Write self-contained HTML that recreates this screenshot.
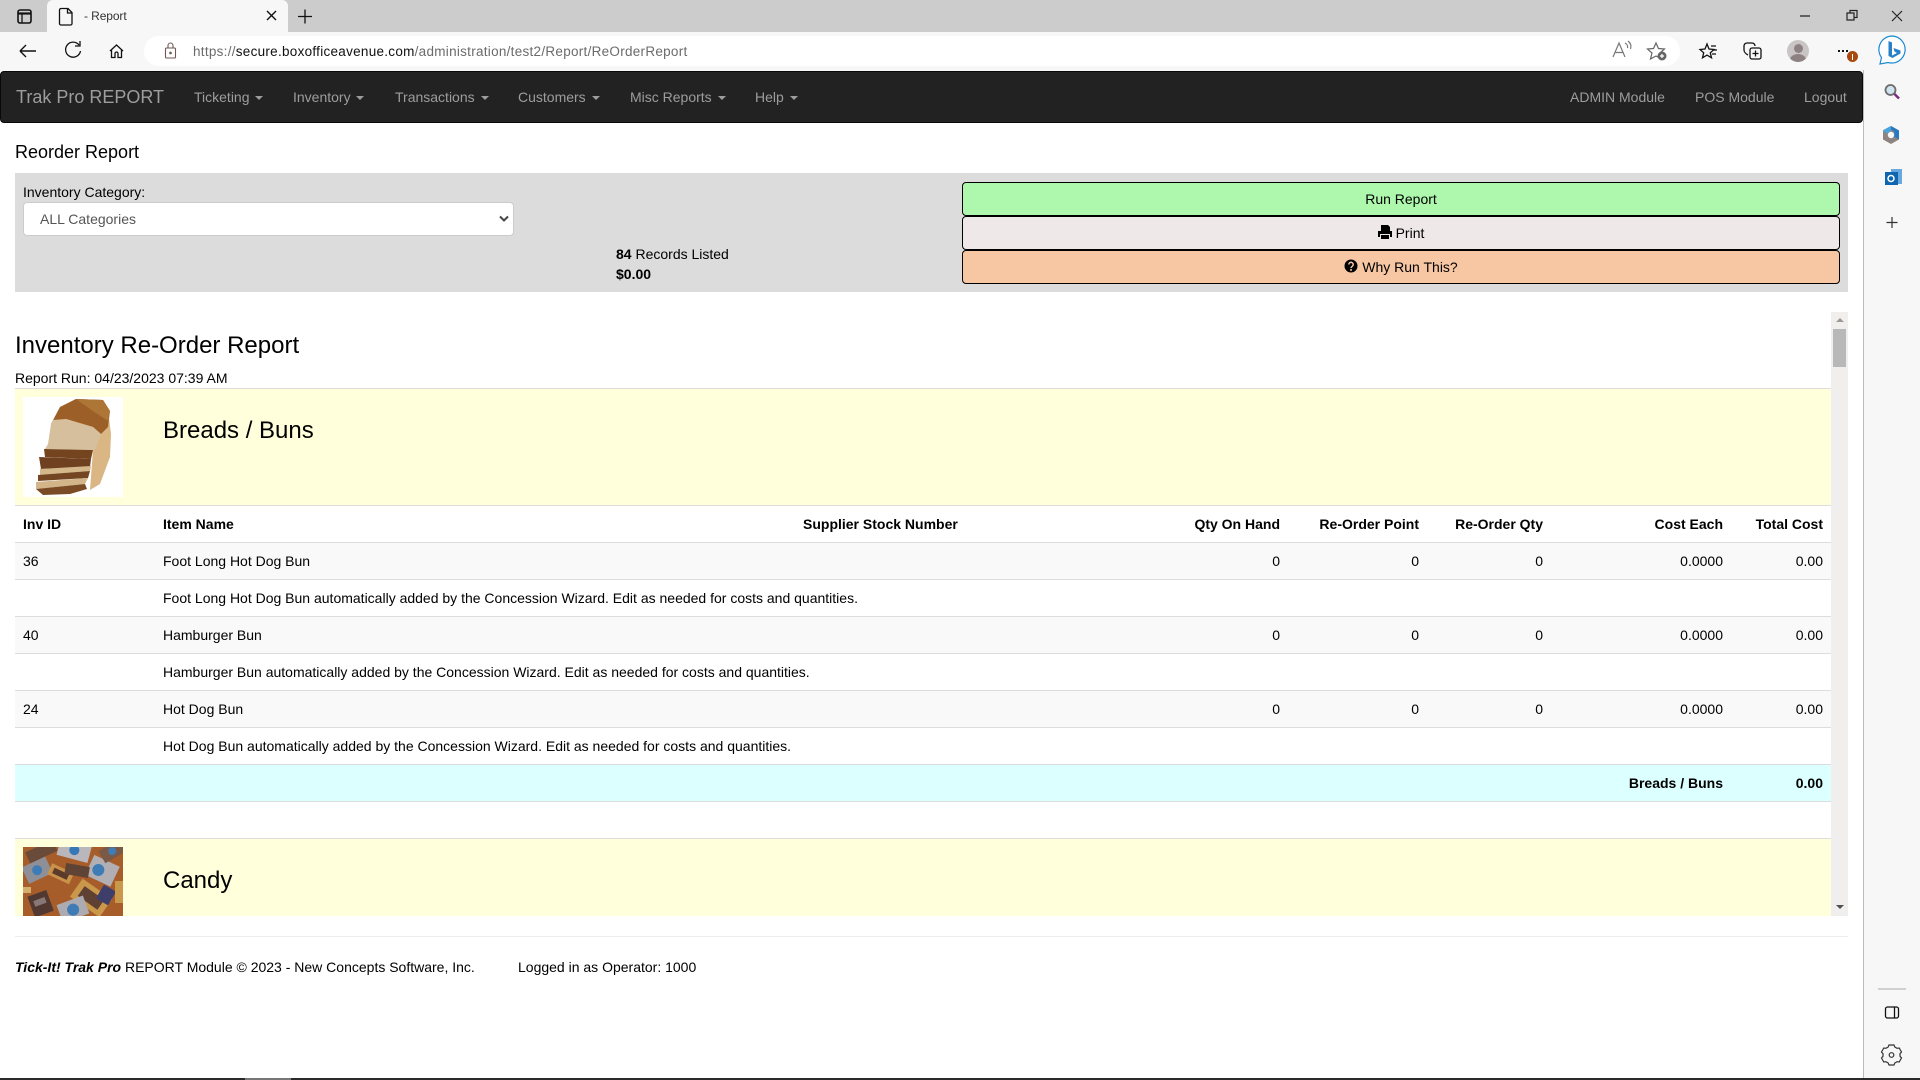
<!DOCTYPE html>
<html><head><meta charset="utf-8"><title>- Report</title>
<style>
html,body{margin:0;padding:0;background:#fff;width:1920px;height:1080px;overflow:hidden}
body{font:14px/20px "Liberation Sans",sans-serif;color:#000;position:relative}
.a{position:absolute;white-space:nowrap}
.b{position:absolute}
.n{position:absolute;top:87px;color:#9d9d9d;white-space:nowrap}
.n i{display:inline-block;width:0;height:0;border-top:4px solid #9d9d9d;border-left:4px solid transparent;border-right:4px solid transparent;margin-left:2px;vertical-align:middle}
.r{position:absolute;left:15px;width:1816px;box-sizing:border-box;border-top:1px solid #ddd}
.t{position:absolute;white-space:nowrap;height:20px}
.btn{position:absolute;left:962px;width:878px;height:34px;box-sizing:border-box;border:1px solid #000;border-radius:4px;text-align:center;line-height:32px}
svg{position:absolute;overflow:visible}
</style></head><body>

<!-- tab strip -->
<div class="b" style="left:0;top:0;width:1920px;height:32px;background:#ccc"></div>
<div class="b" style="left:47px;top:0;width:241px;height:32px;background:#f7f7f7;border-radius:6px 6px 0 0"></div>
<div class="b" style="left:0;top:32px;width:1920px;height:39px;background:#f7f7f7"></div>
<svg style="left:0;top:0" width="300" height="70" fill="none" stroke="#111" stroke-width="1.3">
<rect x="18" y="10" width="13" height="13" rx="2" stroke-width="1.6"/><path d="M18 13.500h13" stroke-width="2.200"/><path d="M22 13.500V23" />
<path d="M61 8.500h7l4 4v11a1.500 1.500 0 0 1-1.500 1.500H61a1.500 1.500 0 0 1-1.500-1.500V10A1.500 1.500 0 0 1 61 8.500zM67.500 8.500v4.500h4.500"/>
<path d="M267 11l9 9M276 11l-9 9" stroke-width="1.4"/>
<path d="M305 9.500v14M298 16.500h14"/>
<path d="M20 51h16M20 51l6-6M20 51l6 6" stroke-width="1.4"/>
<path d="M79 45a7.500 7.500 0 1 0 1.500 6M80 41v5h-5" stroke-width="1.3"/>
<path d="M110 51l6.500-6 6.500 6M111.500 50v7.500h3.500v-4a1.500 1.500 0 0 1 3 0v4h3.500V50" stroke-width="1.3"/>
</svg>
<div class="a" style="left:84px;top:6px;font-size:12px;color:#333;letter-spacing:-.1px">- Report</div>

<!-- address bar -->
<div class="b" style="left:144px;top:36px;width:1536px;height:30px;background:#fff;border-radius:15px"></div>
<svg style="left:164px;top:42px" width="16" height="18" fill="none" stroke="#6e5a55" stroke-width="1.1"><rect x="1.500" y="6" width="10" height="10" rx="1"/><path d="M4 6V3.500a2.500 2.500 0 0 1 5 0V6"/><circle cx="6.500" cy="11" r=".8" fill="#6e5a55"/></svg>
<div class="a" style="left:193px;top:42px;font-size:13.5px;color:#6b6b6b;letter-spacing:.28px"><span>https://</span><span style="color:#111">secure.boxofficeavenue.com</span>/administration/test2/Report/ReOrderReport</div>

<svg style="left:0;top:0" width="1920" height="70" fill="none" stroke="#111" stroke-width="1.2">
<path d="M1800 16h10M1847 13h7v7h-7zM1850 13v-2.500h7v7h-3M1892 11l10 10M1902 11l-10 10" stroke="#222"/>
<path d="M1613 57l6-14 6 14M1615.500 52.500h7M1625 43c2 1 3 3 2.500 5M1628 41c2.500 2 3.500 5 2.500 8" stroke="#777"/>
<path d="M1656 43l2.500 5.500 6 .5-4.500 4 1.500 6-5.500-3-5.500 3 1.500-6-4.500-4 6-.5z" stroke="#666"/>
<circle cx="1662" cy="56" r="4.500" fill="#666" stroke="none"/><path d="M1660 56h4M1662 54v4" stroke="#fff"/>
<path d="M1707 44l2 5 5 .5-3.700 3.300 1.200 5-4.500-2.700-4.500 2.700 1.200-5-3.700-3.300 5-.5zM1711 46h5M1713 50h4M1712 54h4" stroke-width="1.3"/>
<rect x="1750" y="48" width="11" height="11" rx="2" stroke-width="1.3"/><path d="M1755.500 50.500v6M1752.500 53.500h6M1748 55c-2-1-4-3-4-5v-4a3 3 0 0 1 3-3h5a3 3 0 0 1 3 3" stroke-width="1.3"/>
</svg>
<div class="b" style="left:1787px;top:40px;width:22px;height:22px;border-radius:50%;background:#c9c5c4;overflow:hidden"><div class="b" style="left:7px;top:4px;width:9px;height:9px;border-radius:50%;background:#8d8281"></div><div class="b" style="left:3px;top:14px;width:16px;height:12px;border-radius:50%;background:#8d8281"></div></div>
<div class="b" style="left:1838px;top:50px;width:2px;height:2px;background:#111;box-shadow:4px 0 #111,8px 0 #111"></div>
<div class="b" style="left:1847px;top:51px;width:11px;height:11px;border-radius:50%;background:#a9480f"></div>
<div class="b" style="left:1852px;top:54px;width:1px;height:6px;background:#fff"></div>
<svg style="left:1877px;top:34px" width="32" height="32" fill="none"><path d="M15 2a13.500 13.500 0 1 1-4 26.500L3 30l1.500-6.500A13.500 13.500 0 0 1 15 2z" fill="#fff" stroke="#1b8ad3" stroke-width="1.200"/><path d="M11.500 7l3.500 1.500v13l5-2.500-2.500-1.500-1-3.500 7 2.500v3l-8 4.500-4-2z" fill="#2a7fc9"/></svg>

<!-- right sidebar -->
<div class="b" style="left:1863px;top:70px;width:57px;height:1008px;background:#f7f7f7;border-left:1px solid #bbb;box-sizing:border-box"></div>
<svg style="left:1867px;top:70px" width="53" height="1010" fill="none">
<circle cx="23.500" cy="20" r="5" fill="#cfe4ee" stroke="#6c6c6c" stroke-width="1.800"/><path d="M27.500 24l4.500 4.500" stroke="#7a2a80" stroke-width="2.500"/>
<path d="M24 56l8 4.500v9L24 74l-8-4.500v-9z" fill="#8d8481"/><path d="M24 56l8 4.500v9l-5-3 .5-5-3.500-2-4 1.500-3.500-1z" fill="#2679c4"/><path d="M16 60.500L24 56v5l-4 2.500z" fill="#4aa4de"/><circle cx="24" cy="65" r="3.200" fill="#f7f7f7"/>
<rect x="24" y="99" width="11" height="15" fill="#69a9e0"/><rect x="18" y="102" width="13" height="13" fill="#0f65b0"/><circle cx="24" cy="108.500" r="3" stroke="#fff" stroke-width="1.500"/>
<path d="M25 147v11M19.500 152.500h11" stroke="#333" stroke-width="1.200"/>
<path d="M11 919h28" stroke="#aaa"/>
<rect x="18.500" y="937" width="13" height="11" rx="2" stroke="#111" stroke-width="1.300"/><path d="M27.500 937v11" stroke="#111" stroke-width="1.300"/>
<circle cx="24.500" cy="985" r="2.300" stroke="#333" stroke-width="1.200"/><path d="M22 975h5l.8 2 2.200 1.300 2.200-.3 2.300 4-1.500 1.700v2.600l1.500 1.700-2.300 4-2.200-.3-2.200 1.300-.8 2h-5l-.8-2-2.200-1.300-2.200.3-2.300-4 1.500-1.700v-2.600l-1.500-1.700 2.300-4 2.200.3 2.200-1.300z" stroke="#333" stroke-width="1.200"/>
</svg>

<!-- navbar -->
<div class="b" style="left:0;top:71px;width:1863px;height:52px;background:#222;border:1px solid #080808;box-sizing:border-box;border-radius:4px"></div>
<div class="a" style="left:16px;top:87px;font-size:18px;color:#9d9d9d">Trak Pro REPORT</div>
<div class="n" style="left:194px">Ticketing <i></i></div>
<div class="n" style="left:293px">Inventory <i></i></div>
<div class="n" style="left:395px">Transactions <i></i></div>
<div class="n" style="left:518px">Customers <i></i></div>
<div class="n" style="left:630px">Misc Reports <i></i></div>
<div class="n" style="left:755px">Help <i></i></div>
<div class="n" style="left:1570px">ADMIN Module</div>
<div class="n" style="left:1695px">POS Module</div>
<div class="n" style="left:1804px">Logout</div>

<!-- heading -->
<div class="a" style="left:15px;top:142px;font-size:18px">Reorder Report</div>

<!-- filter panel -->
<div class="b" style="left:15px;top:173px;width:1833px;height:119px;background:#dcdcdc"></div>
<div class="a" style="left:23px;top:182px">Inventory Category:</div>
<div class="b" style="left:23px;top:202px;width:491px;height:34px;background:#fff;border:1px solid #ccc;border-radius:4px;box-sizing:border-box"></div>
<div class="a" style="left:40px;top:209px;color:#555">ALL Categories</div>
<svg style="left:499px;top:215px" width="10" height="8" fill="none"><path d="M1 1.500l4 4 4-4" stroke="#444" stroke-width="2"/></svg>
<div class="a" style="left:616px;top:244px"><b>84</b> Records Listed</div>
<div class="a" style="left:616px;top:264px"><b>$0.00</b></div>

<div class="btn" style="top:182px;background:#aef8ad">Run Report</div>
<div class="btn" style="top:216px;background:#efe8e8"><svg style="left:415px;top:8px" width="15" height="15" fill="#000"><path d="M3 0h7l2 2v4H3zM0 6h14v6h-2V9H2v3H0zM3 10h8v4H3z"/></svg><span style="margin-left:18px">Print</span></div>
<div class="btn" style="top:250px;background:#f7c6a2"><svg style="left:381px;top:8px" width="14" height="14"><circle cx="7" cy="7" r="6.500" fill="#000"/><path d="M4.800 5.500a2.200 2.200 0 1 1 3.500 1.800c-1 .7-1.300 1-1.300 1.800" fill="none" stroke="#f7c6a2" stroke-width="1.500"/><circle cx="7" cy="11" r="1" fill="#f7c6a2"/></svg><span style="margin-left:18px">Why Run This?</span></div>

<!-- report -->
<div class="a" style="left:15px;top:332px;font-size:24px;line-height:28px">Inventory Re-Order Report</div>
<div class="a" style="left:15px;top:368px">Report Run: 04/23/2023 07:39 AM</div>

<div class="r" style="top:388px;height:117px;background:#ffffdc"></div>
<div class="b" style="left:23px;top:397px;width:100px;height:100px;background:#fff"></div>
<svg style="left:23px;top:397px" width="100" height="100">
<path d="M28 27L37 10 53 2 80 3 85 13 88 37 87 60 77 87 67 93 70 53 78 37z" fill="#d9b684"/>
<path d="M28 27L37 10 53 2 80 3 87 14 85 30 78 37 70 30 43 22z" fill="#9c5f28"/>
<path d="M53 2L80 3 87 14 85 24 70 14z" fill="#ad7636"/>
<path d="M28 27L25 47 22 52 72 53 78 37 70 30 43 22 30 23z" fill="#d6bf9c"/>
<path d="M21 52L70 53 68 62 22 60z" fill="#74441f"/>
<path d="M16 60L68 62 67 70 18 72z" fill="#6f4120"/>
<path d="M17 72L68 69 67 74 17 78z" fill="#d4b88c"/>
<path d="M15 78L67 74 65 81 15 84z" fill="#744522"/>
<path d="M13 85L65 81 62 87 13 92z" fill="#d2b588"/>
<path d="M13 92L62 87 64 92 47 97 20 98z" fill="#7b4b25"/>
</svg>
<div class="a" style="left:163px;top:417px;font-size:24px;line-height:28px">Breads / Buns</div>

<div class="r" style="top:505px;height:37px"></div>
<div class="t" style="left:23px;top:514px"><b>Inv ID</b></div>
<div class="t" style="left:163px;top:514px"><b>Item Name</b></div>
<div class="t" style="left:803px;top:514px"><b>Supplier Stock Number</b></div>
<div class="t" style="right:640px;top:514px"><b>Qty On Hand</b></div>
<div class="t" style="right:501px;top:514px"><b>Re-Order Point</b></div>
<div class="t" style="right:377px;top:514px"><b>Re-Order Qty</b></div>
<div class="t" style="right:197px;top:514px"><b>Cost Each</b></div>
<div class="t" style="right:97px;top:514px"><b>Total Cost</b></div>

<div class="r" style="top:542px;height:37px;background:#f9f9f9"></div>
<div class="t" style="left:23px;top:551px">36</div><div class="t" style="left:163px;top:551px">Foot Long Hot Dog Bun</div>
<div class="t" style="right:640px;top:551px">0</div><div class="t" style="right:501px;top:551px">0</div><div class="t" style="right:377px;top:551px">0</div><div class="t" style="right:197px;top:551px">0.0000</div><div class="t" style="right:97px;top:551px">0.00</div>
<div class="r" style="top:579px;height:37px"></div>
<div class="t" style="left:163px;top:588px">Foot Long Hot Dog Bun automatically added by the Concession Wizard. Edit as needed for costs and quantities.</div>

<div class="r" style="top:616px;height:37px;background:#f9f9f9"></div>
<div class="t" style="left:23px;top:625px">40</div><div class="t" style="left:163px;top:625px">Hamburger Bun</div>
<div class="t" style="right:640px;top:625px">0</div><div class="t" style="right:501px;top:625px">0</div><div class="t" style="right:377px;top:625px">0</div><div class="t" style="right:197px;top:625px">0.0000</div><div class="t" style="right:97px;top:625px">0.00</div>
<div class="r" style="top:653px;height:37px"></div>
<div class="t" style="left:163px;top:662px">Hamburger Bun automatically added by the Concession Wizard. Edit as needed for costs and quantities.</div>

<div class="r" style="top:690px;height:37px;background:#f9f9f9"></div>
<div class="t" style="left:23px;top:699px">24</div><div class="t" style="left:163px;top:699px">Hot Dog Bun</div>
<div class="t" style="right:640px;top:699px">0</div><div class="t" style="right:501px;top:699px">0</div><div class="t" style="right:377px;top:699px">0</div><div class="t" style="right:197px;top:699px">0.0000</div><div class="t" style="right:97px;top:699px">0.00</div>
<div class="r" style="top:727px;height:38px"></div>
<div class="t" style="left:163px;top:736px">Hot Dog Bun automatically added by the Concession Wizard. Edit as needed for costs and quantities.</div>

<div class="r" style="top:764px;height:38px;background:#dcffff;border-bottom:1px solid #ddd"></div>
<div class="t" style="right:197px;top:773px"><b>Breads / Buns</b></div>
<div class="t" style="right:97px;top:773px"><b>0.00</b></div>

<div class="r" style="top:838px;height:78px;background:#ffffdc"></div>
<div class="b" style="left:23px;top:847px;width:100px;height:69px;overflow:hidden">
<svg style="left:0;top:0" width="100" height="69">
<rect width="100" height="69" fill="#a75d2a"/>
<g transform="rotate(-25 15 25)"><rect x="2" y="14" width="26" height="18" fill="#8f8f98"/><circle cx="15" cy="23" r="5" fill="#3f7cb5"/></g>
<g transform="rotate(15 50 8)"><rect x="34" y="-6" width="32" height="18" fill="#b9b6bc"/><circle cx="50" cy="3" r="5" fill="#3478b8"/></g>
<g transform="rotate(25 78 22)"><rect x="66" y="12" width="28" height="22" fill="#b2afb4"/><circle cx="76" cy="24" r="6" fill="#3f7cb5"/></g>
<g transform="rotate(-30 88 6)"><rect x="78" y="-2" width="26" height="14" fill="#7a5a46"/><circle cx="90" cy="5" r="4" fill="#3f7cb5"/></g>
<g transform="rotate(-25 20 6)"><rect x="4" y="-2" width="30" height="12" fill="#6a4a38"/></g>
<g transform="rotate(25 35 30)"><rect x="24" y="20" width="24" height="12" fill="#c9924a"/><rect x="28" y="23" width="16" height="6" fill="#5b3a2a"/></g>
<g transform="rotate(35 65 50)"><rect x="50" y="38" width="36" height="22" fill="#c9984a"/><rect x="56" y="43" width="24" height="12" fill="#5f4133"/></g>
<g transform="rotate(-20 52 62)"><rect x="36" y="52" width="28" height="19" fill="#adabb2"/><circle cx="50" cy="62" r="6" fill="#3f7cb5"/></g>
<g transform="rotate(-20 17 58)"><rect x="8" y="46" width="20" height="22" fill="#513830"/><rect x="12" y="52" width="12" height="6" fill="#877" /></g>
<rect x="76" y="40" width="14" height="16" fill="#3d3f6a" transform="rotate(30 83 48)"/>
<rect x="42" y="18" width="24" height="11" fill="#5f4334" transform="rotate(10 54 24)"/>
<rect x="0" y="40" width="8" height="6" fill="#d5ae6c"/><rect x="92" y="34" width="8" height="22" fill="#c9984a"/>
</svg></div>
<div class="a" style="left:163px;top:867px;font-size:24px;line-height:28px">Candy</div>

<!-- inner scrollbar -->
<div class="b" style="left:1831px;top:312px;width:17px;height:604px;background:#f1eeee"></div>
<div class="b" style="left:1833px;top:329px;width:13px;height:38px;background:#b8b8b8"></div>
<div class="b" style="left:1836px;top:318px;width:0;height:0;border-left:4px solid transparent;border-right:4px solid transparent;border-bottom:4px solid #999"></div>
<div class="b" style="left:1836px;top:905px;width:0;height:0;border-left:4px solid transparent;border-right:4px solid transparent;border-top:4px solid #505050"></div>

<!-- footer -->
<div class="b" style="left:15px;top:936px;width:1833px;height:1px;background:#eee"></div>
<div class="a" style="left:15px;top:957px"><b><i>Tick-It! Trak Pro</i></b> REPORT Module © 2023 - New Concepts Software, Inc.</div>
<div class="a" style="left:518px;top:957px">Logged in as Operator: 1000</div>

<div class="b" style="left:0;top:1078px;width:1920px;height:2px;background:#2a2a2a"></div>
<div class="b" style="left:245px;top:1078px;width:46px;height:2px;background:#777"></div>
</body></html>
